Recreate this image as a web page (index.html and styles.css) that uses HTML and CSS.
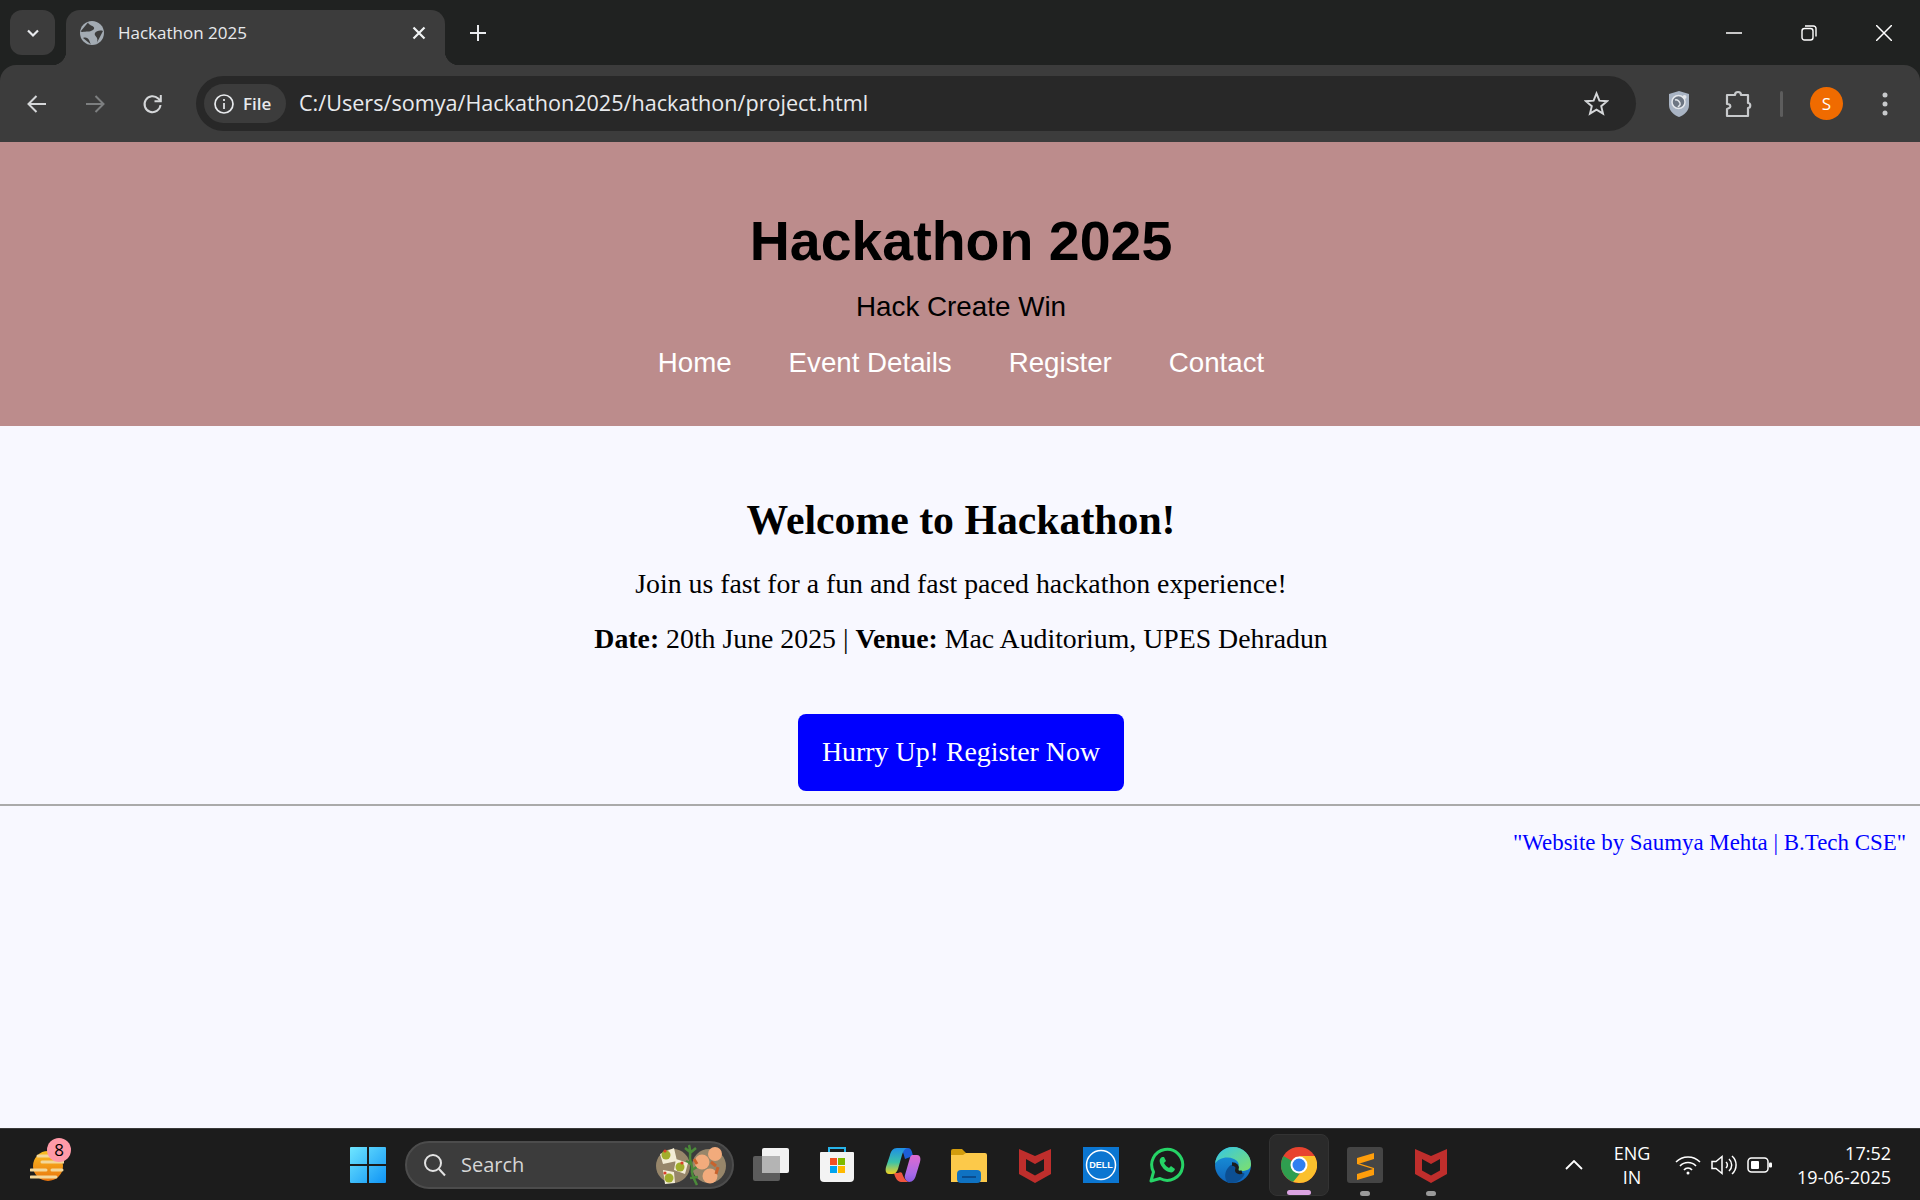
FILE: index.html
```html
<!DOCTYPE html>
<html lang="en">
<head>
    <meta charset="UTF-8">
    <meta name="viewport" content="width=device-width, initial-scale=1.0">
    <title>Hackathon 2025</title>
    <link rel="stylesheet" href="styles.css">
</head>
<body>
    <div class="tabstrip">
        <div class="tab-search">
            <svg width="16" height="16" viewBox="0 0 16 16"><path d="M3 5.500l5 5 5-5" fill="none" stroke="#e8eaed" stroke-width="2.200"/></svg>
        </div>
        <div class="tab">
            <svg class="favicon" width="24" height="24" viewBox="0 0 24 24">
                <circle cx="12" cy="12" r="12" fill="#a3abb3"/>
                <path d="M8 1.500c1 3 5 3 6 5s-3 4-6 4-6 1-7.500 0M23 10c-3-1-7 0-8 2s1 3 2 5 0 5-1 6.500M3 17c3-1 5 0 6 2s1 3 2 4.500" fill="#3c3c3c"/>
            </svg>
            <span class="tab-title">Hackathon 2025</span>
            <svg class="tab-close" width="14" height="14" viewBox="0 0 14 14"><path d="M1.500 1.500l11 11M12.500 1.500l-11 11" stroke="#f1f3f4" stroke-width="2.200"/></svg>
        </div>
        <svg class="new-tab" width="18" height="18" viewBox="0 0 18 18"><path d="M9 1v16M1 9h16" stroke="#e8eaed" stroke-width="2"/></svg>
        <div class="window-controls">
            <svg width="16" height="16" viewBox="0 0 16 16"><path d="M0 8h16" stroke="#fff" stroke-width="1.500"/></svg>
            <svg width="16" height="16" viewBox="0 0 16 16" fill="none" stroke="#fff" stroke-width="1.400"><rect x="1" y="3.500" width="11" height="11.500" rx="2.500"/><path d="M4 1h8.500a2.500 2.500 0 0 1 2.500 2.500v8"/></svg>
            <svg width="16" height="16" viewBox="0 0 16 16"><path d="M0 0l16 16M16 0L0 16" stroke="#fff" stroke-width="1.500"/></svg>
        </div>
    </div>

    <div class="toolbar">
        <div class="tool-btn">
            <svg width="22" height="22" viewBox="0 0 22 22" fill="none" stroke="#d5d7d9" stroke-width="2"><path d="M20 11H3M10.500 3L2.500 11l8 8"/></svg>
        </div>
        <div class="tool-btn">
            <svg width="22" height="22" viewBox="0 0 22 22" fill="none" stroke="#7d7f80" stroke-width="2"><path d="M2 11h17M11.500 3l8 8-8 8"/></svg>
        </div>
        <div class="tool-btn">
            <svg width="22" height="22" viewBox="0 0 22 22" fill="none" stroke="#d5d7d9" stroke-width="2"><path d="M18.500 12a8 8 0 1 1-2.300-6.500l2.300 2.300"/><path d="M18.800 2v6.300h-6.300"/></svg>
        </div>
        <div class="omnibox">
            <div class="chip">
                <svg width="22" height="22" viewBox="0 0 22 22" fill="none" stroke="#e8eaed" stroke-width="1.700"><circle cx="11" cy="11" r="9"/><path d="M11 10v6M11 6v2"/></svg>
                <span>File</span>
            </div>
            <span class="url">C:/Users/somya/Hackathon2025/hackathon/project.html</span>
            <svg class="star" width="25" height="25" viewBox="0 0 26 26"><path d="M13 2.500l3 7.500 8 .6-6.100 5.200 1.900 7.800L13 19.400l-6.800 4.200 1.900-7.800L2 10.600l8-.6z" fill="none" stroke="#d5d7d9" stroke-width="2"/></svg>
        </div>
        <div class="tool-right">
            <svg class="shield" width="22" height="28" viewBox="0 0 22 28">
                <path d="M11 1l10 3v11c0 6-5 10-10 12C6 25 1 21 1 15V4z" fill="#a9b4c4"/>
                <circle cx="10.500" cy="12" r="6.500" fill="#6d7683" stroke="#e4e7ec" stroke-width="1.500"/>
                <path d="M7 10c3-1 4 1 5 3s-1 3-2 4" fill="none" stroke="#dfe3e8" stroke-width="1.500"/>
                <circle cx="16.500" cy="7" r="2" fill="#e4e7ec"/>
            </svg>
            <svg class="puzzle" width="28" height="28" viewBox="0 0 28 28"><path d="M3 5h8c0-4 6-4 6 0h7v8c3 0 3 5 0 5v8H3v-7c3-1 4-2 3-4-1-1-2-1-3-1z" fill="none" stroke="#c8cacc" stroke-width="2.200" stroke-linejoin="round"/></svg>
            <div class="tool-sep"></div>
            <div class="avatar">S</div>
            <svg class="menu-dots" width="6" height="26" viewBox="0 0 6 26" fill="#c8cacc"><circle cx="3" cy="4" r="2.500"/><circle cx="3" cy="13" r="2.500"/><circle cx="3" cy="22" r="2.500"/></svg>
        </div>
    </div>

    <div class="page">
        <header class="site-header">
            <h1>Hackathon 2025</h1>
            <p class="tagline">Hack Create Win</p>
            <nav class="site-nav">
                <a href="#home">Home</a>
                <a href="#details">Event Details</a>
                <a href="#register">Register</a>
                <a href="#contact">Contact</a>
            </nav>
        </header>
        <main class="welcome">
            <h2>Welcome to Hackathon!</h2>
            <p class="lead">Join us fast for a fun and fast paced hackathon experience!</p>
            <p class="event-info"><strong>Date:</strong> 20th June 2025 | <strong>Venue:</strong> Mac Auditorium, UPES Dehradun</p>
            <a class="register-btn" href="#register">Hurry Up! Register Now</a>
        </main>
        <hr class="divider">
        <footer class="site-footer">"Website by Saumya Mehta | B.Tech CSE"</footer>
    </div>

    <div class="taskbar">
        <div class="weather">
            <svg width="34" height="32" viewBox="0 0 34 32">
                <defs><linearGradient id="sun" x1="0" y1="0" x2="0" y2="1"><stop offset="0" stop-color="#fbbf24"/><stop offset="1" stop-color="#e8730c"/></linearGradient></defs>
                <circle cx="18" cy="16" r="15" fill="url(#sun)"/>
                <path d="M8 6h22M12 12h22M1 20h15M22 20h10M1 27h25" stroke="#f3d79a" stroke-width="3" stroke-linecap="round"/>
            </svg>
            <span class="weather-badge">8</span>
        </div>

        <svg class="start" width="36" height="36" viewBox="0 0 36 36">
            <defs><linearGradient id="win" x1="0" y1="0" x2="1" y2="1"><stop offset="0" stop-color="#6fe6ff"/><stop offset="1" stop-color="#0f94f5"/></linearGradient></defs>
            <path d="M0 1a1 1 0 0 1 1-1h16v17H0zM19 0h16a1 1 0 0 1 1 1v16H19zM0 19h17v17H1a1 1 0 0 1-1-1zM19 19h17v16a1 1 0 0 1-1 1H19z" fill="url(#win)"/>
        </svg>

        <div class="search-box">
            <svg width="24" height="24" viewBox="0 0 24 24" fill="none" stroke="#e3e3e3" stroke-width="2"><circle cx="10" cy="10" r="8"/><path d="M16 16l6 6.500"/></svg>
            <span>Search</span>
            <svg class="food" width="70" height="46" viewBox="0 0 70 46">
                <circle cx="17" cy="24" r="17" fill="#97866a"/>
                <circle cx="53" cy="24" r="17" fill="#97866a"/>
                <path d="M33 3c2 6 1 9 1 13s3 8 2 12 3 11 5 15M29 6l5 4M40 6l-6 5M30 19l5 3M41 25l-5 3M34 36l8-1" fill="none" stroke="#4b8a3a" stroke-width="2.500"/>
                <path d="M4 12l14-6 3 13-14 3zM20 17l12 4-3 11-11-4zM7 28l11 2 1 11-10 1z" fill="#f3ecd6"/>
                <circle cx="10" cy="13" r="4.500" fill="#a2ae2d"/><circle cx="9" cy="9" r="1.600" fill="#d9412b"/>
                <circle cx="24" cy="25" r="4.500" fill="#a2ae2d"/><circle cx="26" cy="21" r="1.600" fill="#d9412b"/>
                <circle cx="13" cy="36" r="4.500" fill="#a2ae2d"/><circle cx="9" cy="31" r="1.600" fill="#d9412b"/>
                <circle cx="59" cy="12" r="7" fill="#f2ab7c"/><circle cx="46" cy="20" r="7.500" fill="#f2ab7c"/><circle cx="54" cy="34" r="7.500" fill="#f2ab7c"/>
                <path d="M38 17l3 5M55 20l5 4M62 25l-2 7" stroke="#c9622c" stroke-width="3"/>
            </svg>
        </div>

        <div class="task-icons">
            <div class="task-icon">
                <svg width="36" height="36" viewBox="0 0 36 36">
                    <rect x="0" y="9" width="27" height="25" rx="2" fill="#5c5c5c"/>
                    <rect x="9" y="1" width="27" height="25" rx="2" fill="#f2f2f2"/>
                    <rect x="9" y="9" width="18" height="17" fill="#b4b4b4"/>
                </svg>
            </div>
            <div class="task-icon">
                <svg width="36" height="36" viewBox="0 0 36 36">
                    <path d="M10 6V1h16v5" fill="none" stroke="#27b4ea" stroke-width="2"/>
                    <path d="M2 5h32a1 1 0 0 1 1 1v25a4 4 0 0 1-4 4H5a4 4 0 0 1-4-4V6a1 1 0 0 1 1-1z" fill="#f3f3f3"/>
                    <rect x="11" y="11" width="7" height="7" fill="#f25022"/><rect x="19" y="11" width="7" height="7" fill="#7fba00"/>
                    <rect x="11" y="19" width="7" height="7" fill="#00a4ef"/><rect x="19" y="19" width="7" height="7" fill="#ffb900"/>
                </svg>
            </div>
            <div class="task-icon">
                <svg width="36" height="36" viewBox="0 0 36 36">
                    <defs>
                        <linearGradient id="cop-a" x1="0" y1="0" x2="0" y2="1"><stop offset="0" stop-color="#1f8fe6"/><stop offset=".55" stop-color="#3cc3a8"/><stop offset="1" stop-color="#f2d21f"/></linearGradient>
                        <linearGradient id="cop-b" x1="0" y1="0" x2="0" y2="1"><stop offset="0" stop-color="#e06ad0"/><stop offset=".7" stop-color="#a86ae8"/><stop offset="1" stop-color="#8a5ae0"/></linearGradient>
                    </defs>
                    <path d="M14 1h9c3 0 4 3 5 8l-8 3c-1-4-2-9-6-11z" fill="#1d5fd8"/>
                    <path d="M9 26h4c2-1 3-1 4 0 1 3 3 8 7 9h-8c-3 0-6-4-7-9z" fill="#f0563f"/>
                    <path d="M12 1h10c-3 1-4 4-5 7l-4 14c-1 3-3 5-6 5H4c-3 0-4-3-3-7l4-12c1-4 3-7 7-7z" fill="url(#cop-a)"/>
                    <path d="M27 8h5c3 0 4 3 3 7l-4 13c-1 4-3 7-7 7-3-1-5-4-4-7l4-14c1-3 1-5 3-6z" fill="url(#cop-b)"/>
                </svg>
            </div>
            <div class="task-icon">
                <svg width="36" height="36" viewBox="0 0 36 36">
                    <path d="M0 4a2 2 0 0 1 2-2h9l4 4v6H0z" fill="#d39c0c"/>
                    <path d="M0 35V8h12l3-2h19a2 2 0 0 1 2 2v27z" fill="#fcc94a"/>
                    <rect x="6" y="23" width="24" height="13" rx="4" fill="#0f72c2"/>
                    <path d="M11 30h14" stroke="#0a4d8f" stroke-width="2"/>
                </svg>
            </div>
            <div class="task-icon">
                <svg width="32" height="36" viewBox="0 0 32 36"><path d="M0 2l16 7 16-7v25l-16 9-16-9z" fill="#bf2e2c"/><path d="M7 12l9 5 9-5v11.500l-9 5-9-5z" fill="#1c1c1c"/></svg>
            </div>
            <div class="task-icon">
                <svg width="36" height="36" viewBox="0 0 36 36">
                    <rect width="36" height="36" fill="#0b76d1"/>
                    <circle cx="18" cy="18" r="14.500" fill="none" stroke="#fff" stroke-width="1.500"/>
                    <text class="dell-text" x="18" y="21" text-anchor="middle">DELL</text>
                </svg>
            </div>
            <div class="task-icon">
                <svg width="36" height="36" viewBox="0 0 36 36">
                    <path d="M2 34l2.500-9A15.500 15.500 0 1 1 11 31.500z" fill="none" stroke="#26d366" stroke-width="3" stroke-linejoin="round"/>
                    <path d="M13 10c-2 1-3 3-2 6 1.500 4 5 8 9 9 3 1 5 0 6-3l-4-3-2 2c-2-1-4-3-5-5l2-2-2-4z" fill="#26d366"/>
                </svg>
            </div>
            <div class="task-icon">
                <svg width="36" height="36" viewBox="0 0 36 36">
                    <defs>
                        <linearGradient id="edge-a" x1="0" y1="0" x2="1" y2="1"><stop offset="0" stop-color="#34c6e8"/><stop offset="1" stop-color="#7fe06a"/></linearGradient>
                        <linearGradient id="edge-b" x1="0" y1="0" x2="0" y2="1"><stop offset="0" stop-color="#1a9be0"/><stop offset="1" stop-color="#0f62b8"/></linearGradient>
                    </defs>
                    <circle cx="18" cy="18" r="18" fill="url(#edge-b)"/>
                    <path d="M0 17C1 7 9 0 18 0c10 0 18 8 18 17 0 5-4 7-9 7-3 0-5-1-5-3 3-2 2-7-3-9-7-3-16-1-19 5z" fill="url(#edge-a)"/>
                    <path d="M13 36c-5-5-3-14 3-18 3-1 5 0 6 3 0 4 3 6 7 5 1 1 0 2-1 4-3 4-9 7-15 6z" fill="#0c4f93"/>
                    <path d="M17 17c4 0 6 3 5 5-1 3 2 4 5 3" fill="none" stroke="#1c1c1c" stroke-width="3.500"/>
                </svg>
            </div>
            <div class="task-icon is-active">
                <svg width="36" height="36" viewBox="0 0 36 36">
                    <circle cx="18" cy="18" r="18" fill="#e8432f"/>
                    <path d="M18 18L2.400 9A18 18 0 0 0 13 35.300L20 24z" fill="#2f9e4f"/>
                    <path d="M18 9h15.600A18 18 0 0 1 18 36l-6-1 10-12z" fill="#fbc02d"/>
                    <circle cx="18" cy="18" r="8.500" fill="#fff"/>
                    <circle cx="18" cy="18" r="6.500" fill="#2f7ff0"/>
                </svg>
            </div>
            <div class="task-icon is-open">
                <svg width="36" height="36" viewBox="0 0 36 36">
                    <rect width="36" height="36" rx="3" fill="#454545"/>
                    <path d="M27 6v6L11 17v-1l16 5v7L10 33v-6l16-5-16-5V11z" fill="#ff9e0b"/>
                </svg>
            </div>
            <div class="task-icon is-open">
                <svg width="32" height="36" viewBox="0 0 32 36"><path d="M0 2l16 7 16-7v25l-16 9-16-9z" fill="#bf2e2c"/><path d="M7 12l9 5 9-5v11.500l-9 5-9-5z" fill="#1c1c1c"/></svg>
            </div>
        </div>

        <div class="tray">
            <svg class="tray-chevron" width="18" height="10" viewBox="0 0 18 10"><path d="M1 9l8-8 8 8" fill="none" stroke="#fff" stroke-width="1.800"/></svg>
            <div class="lang">ENG<br>IN</div>
            <svg class="tray-icon" width="26" height="22" viewBox="0 0 26 22" fill="none" stroke="#fff" stroke-width="1.600"><path d="M1 8a17 17 0 0 1 24 0M5 12a11 11 0 0 1 16 0M9 16a5 5 0 0 1 8 0"/><circle cx="13" cy="19" r="1.500" fill="#fff" stroke="none"/></svg>
            <svg class="tray-icon" width="26" height="22" viewBox="0 0 26 22" fill="none" stroke="#fff" stroke-width="1.500"><path d="M1 7.500h4l6-5v17l-6-5H1zM15 8a4 4 0 0 1 0 6M18 5a8 8 0 0 1 0 12M21 2a12 12 0 0 1 0 18"/></svg>
            <svg class="tray-icon" width="26" height="18" viewBox="0 0 26 18"><rect x="1" y="2" width="20" height="14" rx="3.500" fill="none" stroke="#fff" stroke-width="1.500"/><rect x="4" y="5" width="8" height="8" rx="1" fill="#fff"/><rect x="22" y="6.500" width="3" height="5" rx="1" fill="#fff"/></svg>
            <div class="clock">17:52<br>19-06-2025</div>
        </div>
    </div>
</body>
</html>
```

FILE: styles.css
```css
* {
    margin: 0;
    padding: 0;
    box-sizing: border-box;
}

body {
    width: 1920px;
    height: 1200px;
    overflow: hidden;
    display: flex;
    flex-direction: column;
    background-color: #202221;
    font-family: "Liberation Serif", serif;
}

/* browser chrome */
.tabstrip {
    height: 65px;
    flex: none;
    display: flex;
    align-items: flex-start;
    background-color: #202221;
    padding: 10px 0 0 10px;
    font-family: "Open Sans", sans-serif;
}

.tab-search {
    width: 45px;
    height: 45px;
    border-radius: 12px;
    background-color: #3c3c3c;
    display: flex;
    align-items: center;
    justify-content: center;
}

.tab {
    position: relative;
    width: 379px;
    height: 55px;
    margin-left: 11px;
    padding: 0 19px 10px 14px;
    background-color: #3c3c3c;
    border-radius: 14px 14px 0 0;
    display: flex;
    align-items: center;
}

.tab::before,
.tab::after {
    content: "";
    position: absolute;
    bottom: 0;
    width: 14px;
    height: 14px;
}

.tab::before {
    left: -14px;
    background: radial-gradient(circle at 0 0, transparent 14px, #3c3c3c 14.500px);
}

.tab::after {
    right: -14px;
    background: radial-gradient(circle at 100% 0, transparent 14px, #3c3c3c 14.500px);
}

.tab-title {
    margin-left: 14px;
    flex: 1;
    font-size: 17px;
    color: #e8eaed;
}

.new-tab {
    margin: 14px 0 0 24px;
}

.window-controls {
    margin-left: auto;
    width: 194px;
    height: 46px;
    display: flex;
    align-items: center;
    gap: 59px;
}

.toolbar {
    height: 77px;
    flex: none;
    display: flex;
    align-items: center;
    padding-left: 8px;
    background-color: #3c3c3c;
    border-radius: 16px 16px 0 0;
    font-family: "Open Sans", sans-serif;
}

.tool-btn {
    width: 58px;
    display: flex;
    justify-content: center;
}

.omnibox {
    width: 1440px;
    height: 55px;
    margin-left: 14px;
    padding: 0 27px 0 8px;
    border-radius: 28px;
    background-color: #282828;
    display: flex;
    align-items: center;
}

.chip {
    width: 82px;
    height: 39px;
    border-radius: 20px;
    background-color: #3c3c3c;
    display: flex;
    align-items: center;
    gap: 8px;
    padding-left: 9px;
    color: #e8eaed;
    font-size: 17px;
    font-weight: 600;
}

.url {
    margin-left: 13px;
    margin-bottom: 2px;
    flex: 1;
    font-size: 21.600px;
    color: #e8eaed;
}

.tool-right {
    flex: 1;
    display: flex;
    align-items: center;
    padding-left: 32px;
}

.puzzle {
    margin-left: 34px;
}

.tool-sep {
    width: 3px;
    height: 26px;
    margin-left: 28px;
    background-color: #5d5d5d;
    border-radius: 2px;
}

.avatar {
    width: 33px;
    height: 33px;
    margin-left: 27px;
    border-radius: 50%;
    background-color: #f06b00;
    color: #fff;
    font-size: 17px;
    display: flex;
    align-items: center;
    justify-content: center;
}

.menu-dots {
    margin-left: 39px;
}

/* the page itself */
.page {
    flex: 1;
    background-color: #f8f8ff;
}

.site-header {
    height: 284px;
    padding: 67px 0 0 2px;
    background-color: #bc8c8c;
    text-align: center;
    font-family: "Liberation Sans", Arial, sans-serif;
}

.site-header h1 {
    font-size: 55.500px;
    line-height: 64px;
    color: #000;
}

.tagline {
    margin-top: 18px;
    font-size: 27.800px;
    line-height: 32px;
    color: #000;
}

.site-nav {
    margin-top: 24px;
    display: flex;
    justify-content: center;
    gap: 57px;
}

.site-nav a {
    font-size: 27.700px;
    line-height: 32px;
    color: #fff;
    text-decoration: none;
}

.welcome {
    padding: 70px 0 0 2px;
    text-align: center;
    color: #000;
}

.welcome h2 {
    font-size: 41.750px;
    line-height: 48px;
}

.lead,
.event-info {
    margin-top: 23px;
    font-size: 27.800px;
    line-height: 32px;
}

.lead {
    margin-top: 24px;
}

.register-btn {
    display: inline-block;
    margin-top: 59px;
    width: 326px;
    height: 77px;
    line-height: 75px;
    border-radius: 8px;
    background-color: #00f;
    color: #fff;
    font-size: 27.900px;
    text-decoration: none;
}

.divider {
    display: block;
    height: 2px;
    margin-top: 13px;
    border: none;
    background-color: #aaa;
}

.site-footer {
    margin-top: 23px;
    padding-right: 14px;
    text-align: right;
    font-size: 22.900px;
    line-height: 28px;
    color: #00f;
}

/* windows taskbar */
.taskbar {
    position: relative;
    height: 72px;
    flex: none;
    display: flex;
    align-items: center;
    background-color: #1c1c1c;
    border-top: 1px solid #3a3a3a;
    font-family: "Open Sans", sans-serif;
    color: #fff;
}

.weather {
    position: relative;
    width: 34px;
    height: 32px;
    margin: 2px 0 0 30px;
}

.weather-badge {
    position: absolute;
    top: -12px;
    left: 17px;
    width: 24px;
    height: 24px;
    border-radius: 50%;
    background-color: #ff9aa8;
    color: #000;
    font-size: 17px;
    line-height: 24px;
    text-align: center;
}

.start {
    margin-left: 286px;
}

.search-box {
    width: 329px;
    height: 48px;
    margin-left: 19px;
    padding: 0 6px 0 16px;
    border-radius: 24px;
    background-color: #3c3c3c;
    border: 2px solid #4c4c4c;
    display: flex;
    align-items: center;
    gap: 14px;
    color: #d6d6d6;
    font-size: 20px;
}

.food {
    margin-left: auto;
}

.task-icons {
    margin-left: 4px;
    display: flex;
    align-items: center;
}

.task-icon {
    position: relative;
    width: 66px;
    height: 62px;
    display: flex;
    align-items: center;
    justify-content: center;
}

.task-icon.is-active {
    width: 60px;
    margin: 0 3px;
    border-radius: 8px;
    background-color: #2a2a2a;
    border: 1px solid #333;
}

.task-icon.is-active::after,
.task-icon.is-open::after {
    content: "";
    position: absolute;
    left: 50%;
    bottom: 0;
    height: 5px;
    border-radius: 3px;
    transform: translateX(-50%);
}

.task-icon.is-active::after {
    width: 24px;
    background-color: #dba3e2;
}

.task-icon.is-open::after {
    width: 10px;
    background-color: #9a9a9a;
}

.dell-text {
    font-family: "Liberation Sans", sans-serif;
    font-size: 9px;
    font-weight: bold;
    fill: #fff;
}

.tray {
    flex: 1;
    display: flex;
    align-items: center;
    padding-left: 101px;
    font-size: 18px;
}

.lang {
    margin-left: 28px;
    width: 42px;
    text-align: center;
    line-height: 24px;
}

.tray-icon {
    margin-left: 10px;
}

.lang + .tray-icon {
    margin-left: 22px;
}

.clock {
    margin-left: auto;
    padding-right: 29px;
    text-align: right;
    line-height: 24px;
}
```
